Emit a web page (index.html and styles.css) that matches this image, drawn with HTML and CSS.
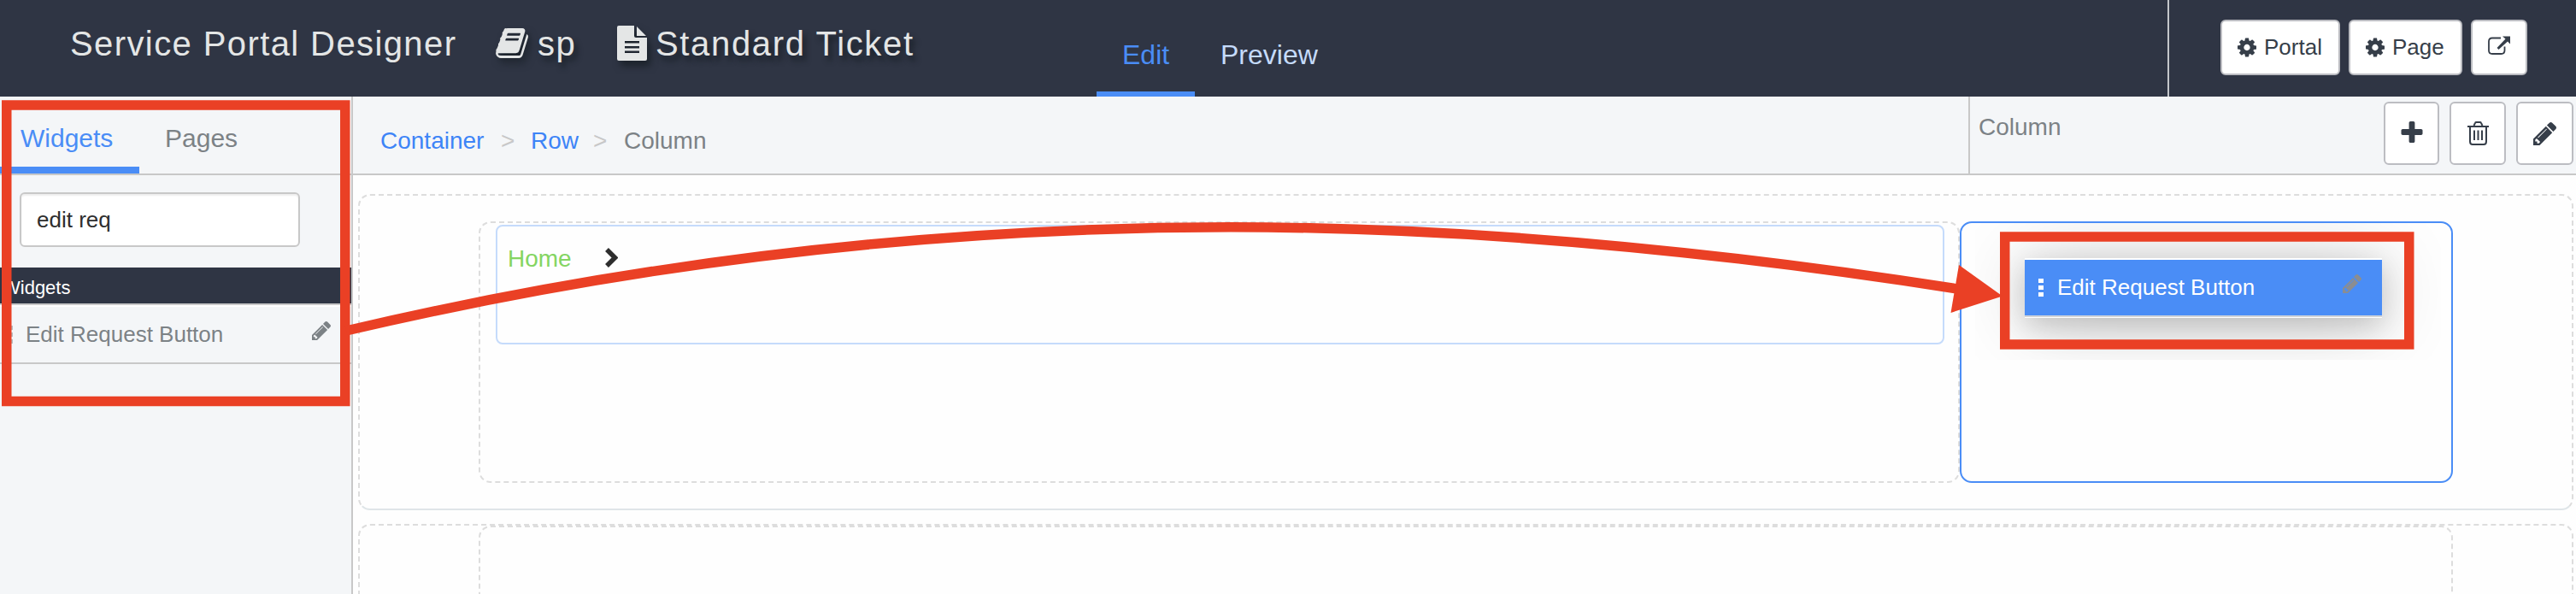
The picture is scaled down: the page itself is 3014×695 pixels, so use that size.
FILE: index.html
```html
<!DOCTYPE html>
<html lang="en">
<head>
<meta charset="utf-8">
<title>Service Portal Designer</title>
<link rel="stylesheet" href="styles.css">
</head>
<body>
<svg class="defs" width="0" height="0">
  <symbol id="cog" viewBox="128 128 1536 1536"><path fill-rule="evenodd" d="M1152 896q0-106-75-181t-181-75-181 75-75 181 75 181 181 75 181-75 75-181zm512-109v222q0 12-8 23t-20 13l-185 28q-19 54-39 91 35 50 107 138 10 12 10 25t-9 23q-27 37-99 108t-94 71q-12 0-26-9l-138-108q-44 23-91 38-16 136-29 186-7 28-36 28h-222q-14 0-24.500-8.500t-11.500-21.500l-28-184q-49-16-90-37l-141 107q-10 9-25 9-14 0-25-11-126-114-165-168-7-10-7-23 0-12 8-23 15-21 51-66.500t54-70.500q-27-50-41-99l-183-27q-13-2-21-12.500t-8-23.500v-222q0-12 8-23t19-13l186-28q14-46 39-92-40-57-107-138-10-12-10-24 0-10 9-23 26-36 98.500-107.500t94.500-71.500q13 0 26 10l138 107q44-23 91-38 16-136 29-186 7-28 36-28h222q14 0 24.500 8.500t11.500 21.500l28 184q49 16 90 37l142-107q9-9 24-9 13 0 25 10 129 119 165 170 7 8 7 22 0 12-8 23-15 21-51 66.500t-54 70.500q26 50 41 98l183 28q13 2 21 12.500t8 23.500z"/></symbol>
  <symbol id="pencil" viewBox="128 149 1515 1515"><path fill-rule="evenodd" d="M491 1536l91-91-235-235-91 91v107h128v128h107zm523-928q0-22-22-22-10 0-17 7l-542 542q-7 7-7 17 0 22 22 22 10 0 17-7l542-542q7-7 7-17zm-54-192l416 416-832 832h-416v-416zm683 96q0 53-37 90l-166 166-416-416 166-165q36-38 90-38 53 0 91 38l235 234q37 39 37 91z"/></symbol>
  <symbol id="book" viewBox="60 128 1670 1536"><path d="M1703 478q40 57 18 129l-275 906q-19 64-76.500 107.500t-122.500 43.500h-923q-77 0-148.500-53.500t-99.500-131.500q-24-67-2-127 0-4 3-27t4-37q1-8-3-21.500t-3-19.500q2-11 8-21t16.500-23.500 16.500-23.500q23-38 45-91.500t30-91.500q3-10 .5-30t-.5-28q3-11 17-28t17-23q21-36 42-92t25-90q1-9-2.500-32t.5-28q4-13 22-30.500t22-22.500q19-26 42.500-84.500t27.500-96.500q1-8-3-25.500t-2-26.500q2-8 9-18t18-23 17-21q8-12 16.500-30.500t15-35 16-36 19.500-32 26.500-23.500 36-11.500 47.500 5.500l-1 3q38-9 51-9h761q74 0 114 56t18 130l-274 906q-36 119-71.500 153.500t-128.500 34.500h-869q-27 0-38 15-11 16-1 43 24 70 144 70h923q29 0 56-15.500t35-41.500l300-987q7-22 5-57 38 15 59 43zm-1064 2q-4 13 2 22.500t20 9.500h608q13 0 25.500-9.500t16.500-22.500l21-64q4-13-2-22.500t-20-9.500h-608q-13 0-25.500 9.500t-16.500 22.500zm-83 256q-4 13 2 22.500t20 9.500h608q13 0 25.500-9.500t16.500-22.500l21-64q4-13-2-22.500t-20-9.500h-608q-13 0-25.500 9.500t-16.500 22.500z"/></symbol>
</svg>

<header class="header">
  <div class="title">Service Portal Designer</div>
  <div class="crumb portal">
    <svg class="i-book"><use href="#book"/></svg><span>sp</span>
  </div>
  <div class="crumb page">
    <svg class="i-file" viewBox="0 0 35 41"><path fill-rule="evenodd" d="M2 0H20V12Q20 14 22 14H35V39Q35 41 33 41H2Q0 41 0 39V2Q0 0 2 0ZM23 1L34 12H23ZM9 18V20.500H26V18ZM9 24V26.500H26V24ZM9 29.500V32H26V29.500Z"/></svg><span>Standard Ticket</span>
  </div>
  <nav class="modes">
    <a class="mode active">Edit</a>
    <a class="mode">Preview</a>
  </nav>
  <div class="actions">
    <button class="btn b-portal"><svg class="i-cog"><use href="#cog"/></svg><span>Portal</span></button>
    <button class="btn b-page"><svg class="i-cog"><use href="#cog"/></svg><span>Page</span></button>
    <button class="btn b-ext"><svg class="i-ext" viewBox="0 0 26 23"><path d="M15 2.500H5Q1 2.500 1 6.500V17Q1 21 5 21H15.500Q19.500 21 19.500 17V12.500" fill="none" stroke="currentColor" stroke-width="1.800"/><path d="M17 .5H26V9.500L23 6.500L12.500 16L10.500 14L20.500 3.500Z"/></svg></button>
  </div>
</header>

<div class="main">
  <aside class="sidebar">
    <div class="tabs"><a class="tab active">Widgets</a><a class="tab">Pages</a></div>
    <div class="search"><input class="filter" type="text" value="edit req"></div>
    <div class="group">Widgets</div>
    <div class="item"><i class="grip"></i><span class="label">Edit Request Button</span><svg class="i-pen"><use href="#pencil"/></svg></div>
  </aside>

  <section class="work">
    <div class="toolbar">
      <div class="path"><a class="c1">Container</a><span class="sep">&gt;</span><a class="c2">Row</a><span class="sep">&gt;</span><span>Column</span></div>
      <div class="props">
        <span class="kind">Column</span>
        <button class="tool t1"><svg class="i-plus" viewBox="192 128 1408 1408"><path d="M1600 736v192q0 40-28 68t-68 28h-416v416q0 40-28 68t-68 28h-192q-40 0-68-28t-28-68v-416h-416q-40 0-68-28t-28-68v-192q0-40 28-68t68-28h416v-416q0-40 28-68t68-28h192q40 0 68 28t28 68v416h416q40 0 68 28t28 68z"/></svg></button>
        <button class="tool t2"><svg class="i-trash" viewBox="0 0 25 28"><g fill="none" stroke="currentColor" stroke-width="2"><path d="M3 6V23.500Q3 27 6 27H19Q22 27 22 23.500V6"/><path d="M0 6H25M7.500 5L9 1.800Q9.300 1 10.500 1H14.500Q15.700 1 16 1.800L17.500 5"/><path d="M8 10.500V22M12.500 10.500V22M17 10.500V22"/></g></svg></button>
        <button class="tool t3"><svg class="i-edit"><use href="#pencil"/></svg></button>
      </div>
    </div>
    <div class="canvas">
      <div class="container first">
        <div class="column wide">
          <div class="widget"><span class="home">Home</span><svg class="i-chev" viewBox="0 0 16 25"><path d="M3 3L12.500 12.500L3 22" fill="none" stroke="currentColor" stroke-width="5.500"/></svg></div>
        </div>
        <div class="column selected"></div>
      </div>
      <div class="container second"><div class="column full"></div></div>
    </div>
  </section>
</div>

<div class="drag-layer">
  <div class="drag"><i class="grip"></i><span class="label">Edit Request Button</span><svg class="i-pen"><use href="#pencil"/></svg></div>
</div>

<svg class="notes" viewBox="0 0 3014 695">
  <g fill="none" stroke="#ea4025" stroke-width="11.500">
    <rect x="7.750" y="123" width="396" height="346.500"/>
    <rect x="2345.750" y="277" width="473" height="126"/>
    <path d="M405 387Q921 265.800 1440 265.800Q1830 265.800 2290 338"/>
  </g>
  <path fill="#ea4025" d="M2292 310L2343 346.500L2282.500 366Z"/>
</svg>
</body>
</html>
```
FILE: styles.css
```css
* { box-sizing: border-box; }

body {
  margin: 0;
  width: 3014px;
  height: 695px;
  overflow: hidden;
  background: #fff;
  font-family: "Liberation Sans", Arial, Helvetica, sans-serif;
  white-space: nowrap;
}

.defs { position: absolute; }
svg { display: block; flex: none; fill: currentColor; }
button { padding: 0; font: inherit; color: inherit; }

/* Header */
.header {
  display: flex;
  height: 113px;
  background: #2f3544;
  color: #e4e6e6;
}
.title, .crumb {
  font-size: 40px;
  line-height: 103px;
  letter-spacing: 1.4px;
}
.title { width: 580px; padding-left: 82px; }
.crumb { display: flex; align-items: flex-start; }
.crumb svg { filter: drop-shadow(4px 6px 4px rgba(20, 28, 34, .8)); }
.crumb span { text-shadow: 4px 6px 6px rgba(20, 28, 34, .8); }
.portal { width: 142px; }
.page { width: 561px; letter-spacing: 1.65px; }
.i-book { width: 38px; height: 35px; margin: 33px 11px 0 0; }
.i-file { width: 35px; height: 41px; margin: 30px 10px 0 0; }

.modes { display: flex; width: 1255px; border-right: 2px solid #c4c7cb; }
.mode {
  height: 113px;
  padding: 21px 30px 0;
  font-size: 32px;
  line-height: 86px;
  color: #c5dbfb;
}
.mode.active { width: 115px; color: #4a8df6; border-bottom: 6px solid #4a8df6; }

.actions { display: flex; padding: 23px 0 0 60px; color: #363e49; }
.btn {
  display: flex;
  align-items: center;
  height: 65px;
  margin-right: 10px;
  border: 2px solid #bcbdc2;
  border-radius: 6px;
  background: #fff;
  font-size: 26px;
}
.b-portal, .b-page { padding-left: 18px; }
.b-portal { width: 140px; }
.b-page { width: 133px; }
.b-ext { width: 66px; padding: 0 0 5px 18px; }
.i-cog { width: 22px; height: 23px; margin-right: 9px; }
.i-ext { width: 26px; height: 23px; }

/* Layout below the header */
.main { display: flex; height: 582px; }

/* Sidebar */
.sidebar { width: 413px; background: #f4f6f8; border-right: 2px solid #c8c8c8; }
.tabs { display: flex; height: 92px; border-bottom: 2px solid #c8c8c8; }
.tab { height: 90px; padding-left: 30px; font-size: 30px; line-height: 97px; color: #7c8286; }
.tab.active { width: 163px; padding-left: 24px; color: #4a8df6; border-bottom: 8px solid #4a8df6; }
.search { height: 108px; padding: 20px 0 0 23px; }
.filter {
  display: block;
  width: 328px;
  height: 64px;
  padding: 0 18px;
  border: 2px solid #c8c8c8;
  border-radius: 6px;
  background: #fff;
  box-shadow: inset 0 2px 2px rgba(0, 0, 0, .07);
  font: 26px "Liberation Sans", Arial, sans-serif;
  color: #2e2e2e;
}
.group {
  height: 44px;
  padding-left: 3px;
  overflow: hidden;
  background: #2f3544;
  border-bottom: 2px solid #c8c8c8;
  font-size: 22px;
  line-height: 48px;
  color: #fff;
}
.item, .drag { display: flex; align-items: center; font-size: 26px; }
.item {
  height: 69px;
  padding-left: 9px;
  border-top: 2px solid #fff;
  border-bottom: 2px solid #c8c8c8;
  color: #7c8286;
}
.grip {
  width: 6px;
  height: 21px;
  background: repeating-linear-gradient(currentColor 0 5px, transparent 5px 8px);
}
.item .grip { opacity: .5; }
.item .label { width: 350px; padding-left: 15px; }
.i-pen { width: 22px; height: 22px; margin: 0 0 10px 0; }

/* Toolbar */
.work { flex: 1; }
.toolbar {
  display: flex;
  height: 92px;
  background: #f4f6f8;
  border-bottom: 2px solid #c8c8c8;
  color: #7c8286;
  font-size: 28px;
}
.path { display: flex; width: 1890px; height: 90px; padding-left: 32px; line-height: 103px; }
.path a { color: #3d84f7; }
.c1 { width: 141px; }
.c2 { width: 55px; }
.sep { width: 35px; color: #c8c8c8; }
.path .c2 + .sep { width: 36px; margin-left: 18px; }
.props { display: flex; flex: 1; height: 90px; border-left: 2px solid #c8c8c8; }
.kind { width: 484px; padding-left: 10px; line-height: 71px; }
.tool {
  height: 74px;
  margin: 6px 12px 0 0;
  border: 2px solid #bcbdc2;
  border-radius: 6px;
  background: #fff;
  color: #363e49;
}
.tool svg { margin: 0 auto; }
.t1 { width: 65px; padding-bottom: 3px; }
.t2 { width: 66px; }
.t3 { width: 67px; margin-right: 0; }
.i-plus { width: 26px; height: 25px; }
.i-trash { width: 25px; height: 28px; }
.i-edit { width: 27px; height: 27px; }

/* Canvas */
.canvas { height: 490px; padding: 22px 3px 0 6px; overflow: hidden; background: #fefefe; }
.container { display: flex; width: 2592px; border: 2px dashed #ddd; border-radius: 14px; }
.first { height: 370px; padding: 30px 0 0 139px; border-bottom: 2px solid #dfe5e8; }
.second { height: 160px; margin-top: 16px; padding-left: 139px; }
.column { border: 2px dashed #ddd; border-radius: 14px; }
.wide { width: 1733px; height: 306px; padding: 2px 16px 0 18px; }
.selected { width: 577px; height: 306px; border: 2px solid #4a8df6; }
.full { width: 2310px; height: 180px; }
.widget {
  display: flex;
  height: 140px;
  padding-left: 12px;
  border: 2px solid #c5dbfb;
  border-radius: 8px;
  font-size: 28px;
  line-height: 75px;
}
.home { width: 113px; color: #84d562; }
.i-chev { width: 16px; height: 25px; margin-top: 24px; color: #2e2e2e; }

/* Widget being dragged over the canvas */
.drag-layer {
  position: absolute;
  left: 2311px;
  top: 261px;
  width: 545px;
  height: 160px;
  padding: 41px 69px 0 58px;
  overflow: hidden;
}
.drag {
  height: 69px;
  padding-left: 16px;
  border-top: 2px solid #fff;
  border-bottom: 2px solid #d0d3d8;
  background: #4a8df6;
  background-clip: padding-box;
  color: #fff;
  box-shadow: 0 1px 0 #fff, 0 6px 90px rgba(0, 0, 0, .2), 0 10px 34px rgba(0, 0, 0, .18);
}
.drag .label { width: 350px; padding-left: 16px; }
.drag .i-pen { color: #8a8d92; }

/* Markup drawn over the page */
.notes { position: absolute; left: 0; top: 0; width: 3014px; height: 695px; }
```
